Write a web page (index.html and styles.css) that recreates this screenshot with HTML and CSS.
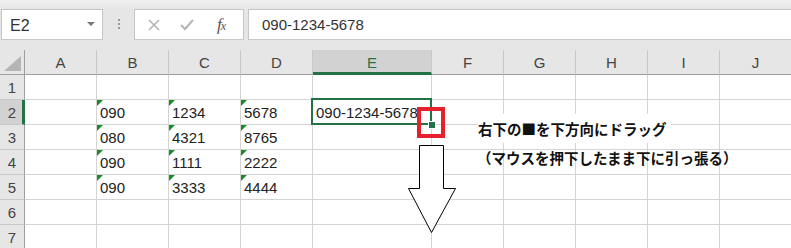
FILE: index.html
```html
<!DOCTYPE html>
<html lang="ja">
<head>
<meta charset="utf-8">
<link rel="stylesheet" href="styles.css">
</head>
<body>
<div class="app">
  <div class="fbar">
    <div class="namebox"><span class="ref">E2</span><span class="dd"></span></div>
    <div class="grip"><i></i><i></i><i></i></div>
    <div class="fbtns">
      <svg class="ic" width="14" height="14" viewBox="0 0 14 14"><path d="M2 2 L12 12 M12 2 L2 12" stroke="#b3b3b3" stroke-width="1.5" fill="none"/></svg>
      <svg class="ic" width="16" height="14" viewBox="0 0 16 14"><path d="M2 7 L6 11 L14 2" stroke="#b3b3b3" stroke-width="2" fill="none"/></svg>
      <span class="fx">f<small>x</small></span>
    </div>
    <div class="finput">090-1234-5678</div>
  </div>
  <div class="sheet">
    <div class="grid">
      <div class="h corner"><span class="tri"></span></div>
      <div class="h">A</div><div class="h">B</div><div class="h">C</div><div class="h">D</div><div class="h sel">E</div><div class="h">F</div><div class="h">G</div><div class="h">H</div><div class="h">I</div><div class="h">J</div>

      <div class="rh">1</div>
      <div class="c"></div><div class="c"></div><div class="c"></div><div class="c"></div><div class="c"></div><div class="c"></div><div class="c"></div><div class="c"></div><div class="c"></div><div class="c"></div>

      <div class="rh sel">2</div>
      <div class="c"></div><div class="c t">090</div><div class="c t">1234</div><div class="c t">5678</div>
      <div class="c active">090-1234-5678<span class="selbox"></span><span class="handle"></span></div>
      <div class="c"></div><div class="c"></div><div class="c"></div><div class="c"></div><div class="c"></div>

      <div class="rh">3</div>
      <div class="c"></div><div class="c t">080</div><div class="c t">4321</div><div class="c t">8765</div>
      <div class="c"></div><div class="c"></div><div class="c"></div><div class="c"></div><div class="c"></div><div class="c"></div>

      <div class="rh">4</div>
      <div class="c"></div><div class="c t">090</div><div class="c t">1111</div><div class="c t">2222</div>
      <div class="c"></div><div class="c"></div><div class="c"></div><div class="c"></div><div class="c"></div><div class="c"></div>

      <div class="rh">5</div>
      <div class="c"></div><div class="c t">090</div><div class="c t">3333</div><div class="c t">4444</div>
      <div class="c"></div><div class="c"></div><div class="c"></div><div class="c"></div><div class="c"></div><div class="c"></div>

      <div class="rh">6</div>
      <div class="c"></div><div class="c"></div><div class="c"></div><div class="c"></div><div class="c"></div><div class="c"></div><div class="c"></div><div class="c"></div><div class="c"></div><div class="c"></div>

      <div class="rh">7</div>
      <div class="c"></div><div class="c"></div><div class="c"></div><div class="c"></div><div class="c"></div><div class="c"></div><div class="c"></div><div class="c"></div><div class="c"></div><div class="c"></div>
    </div>

    <span class="redbox"></span>
    <svg class="arrow" width="49" height="90" viewBox="0 0 49 90">
      <path d="M11.5 0.5 H35.5 V43.5 H47.5 L23.5 87.5 L0.5 43.5 H11.5 Z" fill="#fff" stroke="#000" stroke-width="1"/>
    </svg>
    <div class="note">
      <p class="l1">右下の■を下方向にドラッグ</p>
      <p class="l2">（マウスを押下したまま下に引っ張る）</p>
    </div>
  </div>
</div>
</body>
</html>
```
FILE: styles.css
```css
html, body {
  margin: 0;
  padding: 0;
  background: #fff;
}
.app {
  width: 791px;
  height: 248px;
  overflow: hidden;
  font-family: "Liberation Sans", Arial, sans-serif;
}
.fbar {
  height: 50px;
  box-sizing: border-box;
  padding-top: 9px;
  background: linear-gradient(#f0f0f0 0, #e8e8e8 8px, #e6e6e6 9px);
  display: flex;
  align-items: flex-start;
}
.namebox {
  margin-left: 1px;
  width: 102px;
  height: 31px;
  box-sizing: border-box;
  background: #fff;
  border: 1px solid #c6c6c6;
  display: flex;
  align-items: center;
  justify-content: space-between;
  padding: 3px 7px 0 8px;
}
.ref {
  font-size: 16px;
  color: #333;
}
.dd {
  width: 0;
  height: 0;
  border-left: 4px solid transparent;
  border-right: 4px solid transparent;
  border-top: 4px solid #777;
  margin-top: -5px;
}
.grip {
  width: 31px;
  height: 31px;
  display: flex;
  flex-direction: column;
  align-items: center;
  justify-content: center;
  gap: 2px;
  padding-bottom: 2px;
  box-sizing: border-box;
}
.grip i {
  width: 2px;
  height: 2px;
  background: #9a9a9a;
  display: block;
}
.fbtns {
  width: 110px;
  height: 31px;
  box-sizing: border-box;
  background: #fff;
  border: 1px solid #c6c6c6;
  display: flex;
  align-items: center;
  padding: 1px 0 0 12px;
}
.fbtns .ic:first-child {
  margin-right: 18px;
}
.fbtns .fx {
  margin-left: 22px;
  font-family: "Liberation Serif", serif;
  font-style: italic;
  font-size: 17px;
  color: #555;
  letter-spacing: -1px;
}
.fbtns .fx small {
  font-size: 12px;
}
.finput {
  margin-left: 4px;
  flex: 1;
  height: 31px;
  box-sizing: border-box;
  background: #fff;
  border: 1px solid #c6c6c6;
  border-right: none;
  font-size: 15px;
  color: #333;
  padding: 6px 0 0 13px;
}
.sheet {
  position: relative;
}
.grid {
  display: grid;
  grid-template-columns: 25px 72px 72px 72px 72px 119px 72px 72px 72px 72px 72px;
  grid-auto-rows: 25px;
}
.grid > div {
  box-sizing: border-box;
}
.h {
  background: #e6e6e6;
  border-right: 1px solid #c8c8c8;
  border-bottom: 1px solid #9e9e9e;
  font-size: 15px;
  color: #444;
  display: flex;
  align-items: center;
  justify-content: center;
  padding-top: 1px;
}
.h.sel {
  background: #d2d2d2;
  color: #217346;
  border-bottom: 3px solid #217346;
  padding-top: 3px;
}
.corner {
  position: relative;
  border-right: 1px solid #9e9e9e;
}
.tri {
  position: absolute;
  right: 3px;
  bottom: 3px;
  width: 0;
  height: 0;
  border-left: 17px solid transparent;
  border-bottom: 15px solid #b5b5b5;
}
.rh {
  background: #e6e6e6;
  border-right: 1px solid #9e9e9e;
  border-bottom: 1px solid #c8c8c8;
  font-size: 15px;
  color: #444;
  display: flex;
  align-items: center;
  justify-content: center;
  padding-top: 1px;
}
.rh.sel {
  background: #d2d2d2;
  border-right: 3px solid #217346;
  padding-left: 2px;
}
.c {
  border-right: 1px solid #d4d4d4;
  border-bottom: 1px solid #d4d4d4;
  font-size: 15px;
  color: #222;
  display: flex;
  align-items: center;
  padding: 1px 0 0 3px;
  white-space: nowrap;
  position: relative;
}
.c.t::before {
  content: "";
  position: absolute;
  left: 0;
  top: 0;
  width: 0;
  height: 0;
  border-top: 6px solid #1c8a28;
  border-right: 6px solid transparent;
}
.selbox {
  position: absolute;
  left: -2px;
  top: -2px;
  right: -1px;
  bottom: -1px;
  border: 2px solid #217346;
}
.handle {
  position: absolute;
  right: -4px;
  bottom: -4px;
  width: 6px;
  height: 6px;
  box-sizing: border-box;
  background: #217346;
  outline: 1px solid #fff;
  z-index: 1;
}
.redbox {
  position: absolute;
  left: 417px;
  top: 57px;
  width: 28px;
  height: 31px;
  box-sizing: border-box;
  border: 4px solid #e5212b;
  z-index: 2;
}
.arrow {
  position: absolute;
  left: 408px;
  top: 95px;
}
.note {
  position: absolute;
  left: 478px;
  top: 64px;
  font-family: "Noto Sans CJK JP", sans-serif;
  font-weight: bold;
  font-size: 14.5px;
  color: #111;
  display: flex;
  flex-direction: column;
  align-items: flex-start;
}
.note p {
  margin: 0;
  line-height: 29px;
}
.note .l1 {
  background: #fff;
  padding-right: 4px;
}
.note .l2 {
  margin-left: -1px;
}
```
